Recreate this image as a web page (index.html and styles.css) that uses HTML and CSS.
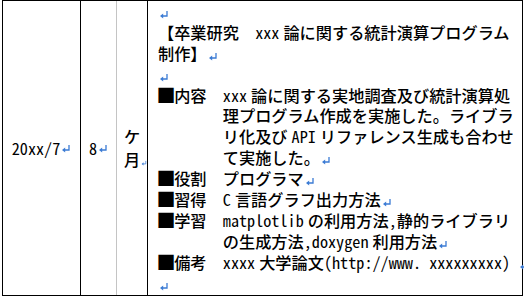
FILE: index.html
```html
<!DOCTYPE html>
<html lang="ja">
<head>
<meta charset="utf-8">
<link rel="stylesheet" href="styles.css">
</head>
<body>
<div class="table">
  <div class="cell c-date"><span class="en">20xx/7</span><svg class="pm" viewBox="0 0 10 9"><path d="M8 1V6H3.5"/><polygon points="1,6 4.2,3.4 4.2,8.6"/></svg></div>
  <div class="cell c-num"><span class="en">8</span><svg class="pm" viewBox="0 0 10 9"><path d="M8 1V6H3.5"/><polygon points="1,6 4.2,3.4 4.2,8.6"/></svg></div>
  <div class="cell c-unit"><div>ケ</div><div>月<svg class="pm pm-small" viewBox="0 0 10 9"><path d="M8 1V6H3.5"/><polygon points="1,6 4.2,3.4 4.2,8.6"/></svg></div></div>
  <div class="cell c-body">
    <div class="line"><svg class="pm" viewBox="0 0 10 9"><path d="M8 1V6H3.5"/><polygon points="1,6 4.2,3.4 4.2,8.6"/></svg></div>
    <div class="line">【卒業研究　<span class="en as-r">xxx</span>論に関する統計演算プログラム</div>
    <div class="line">制作】<svg class="pm" viewBox="0 0 10 9"><path d="M8 1V6H3.5"/><polygon points="1,6 4.2,3.4 4.2,8.6"/></svg></div>
    <div class="line"><svg class="pm" viewBox="0 0 10 9"><path d="M8 1V6H3.5"/><polygon points="1,6 4.2,3.4 4.2,8.6"/></svg></div>
    <div class="item">
      <div class="label"><span class="sq">■</span>内容</div>
      <div class="text">
        <div class="line"><span class="en as-r">xxx</span>論に関する実地調査及び統計演算処</div>
        <div class="line">理プログラム作成を実施した。ライブラ</div>
        <div class="line">リ化及び<span class="en as-l as-r">API</span>リファレンス生成も合わせ</div>
        <div class="line">て実施した。<svg class="pm" viewBox="0 0 10 9"><path d="M8 1V6H3.5"/><polygon points="1,6 4.2,3.4 4.2,8.6"/></svg></div>
      </div>
    </div>
    <div class="item">
      <div class="label"><span class="sq">■</span>役割</div>
      <div class="text"><div class="line">プログラマ<svg class="pm" viewBox="0 0 10 9"><path d="M8 1V6H3.5"/><polygon points="1,6 4.2,3.4 4.2,8.6"/></svg></div></div>
    </div>
    <div class="item">
      <div class="label"><span class="sq">■</span>習得</div>
      <div class="text"><div class="line"><span class="en as-r">C</span>言語グラフ出力方法<svg class="pm" viewBox="0 0 10 9"><path d="M8 1V6H3.5"/><polygon points="1,6 4.2,3.4 4.2,8.6"/></svg></div></div>
    </div>
    <div class="item">
      <div class="label"><span class="sq">■</span>学習</div>
      <div class="text">
        <div class="line"><span class="en as-r">matplotlib</span>の利用方法<span class="en">,</span>静的ライブラリ</div>
        <div class="line">の生成方法<span class="en as-r">,doxygen</span>利用方法<svg class="pm" viewBox="0 0 10 9"><path d="M8 1V6H3.5"/><polygon points="1,6 4.2,3.4 4.2,8.6"/></svg></div>
      </div>
    </div>
    <div class="item">
      <div class="label"><span class="sq">■</span>備考</div>
      <div class="text"><div class="line"><span class="en as-r">xxxx</span>大学論文<span class="en">(http://www. xxxxxxxxx) </span><svg class="pm" viewBox="0 0 10 9"><path d="M8 1V6H3.5"/><polygon points="1,6 4.2,3.4 4.2,8.6"/></svg></div></div>
    </div>
    <div class="line"><svg class="pm" viewBox="0 0 10 9"><path d="M8 1V6H3.5"/><polygon points="1,6 4.2,3.4 4.2,8.6"/></svg></div>
  </div>
</div>
</body>
</html>
```

FILE: styles.css
```css
* { box-sizing: border-box; }
html, body { margin: 0; padding: 0; background: #fff; }
body {
  font-family: "Noto Sans CJK JP", sans-serif;
  font-size: 16.2px;
  font-weight: 500;
  color: #000;
  text-spacing-trim: space-all;
}
.table {
  margin-left: 2px;
  width: 521px;
  height: 296px;
  border: 1px solid #000;
  display: grid;
  grid-template-columns: 78px 36px 31px 1fr;
}
.cell {
  border-right: 1px solid #000;
  display: flex;
  flex-direction: column;
  justify-content: center;
  align-items: center;
}
.c-date, .c-num { flex-direction: row; }
.c-num { border-right-color: #c4c4c4; }
.c-unit { line-height: 23px; }
.c-body {
  border-right: none;
  display: block;
  padding-left: 10px;
  line-height: 20.9px;
}
.en {
  font-family: "Noto Sans Mono CJK JP", "Noto Sans CJK JP", monospace;
  font-weight: 400;
}
.as-r { margin-right: 4px; }
.as-l { margin-left: 4px; }
.line { white-space: nowrap; height: 20.9px; }
.item {
  display: grid;
  grid-template-columns: 4em 1fr;
}
.label { white-space: nowrap; }
.sq {
  display: inline-block;
  transform: scale(1.18);
}
.pm {
  width: 10px;
  height: 9px;
  vertical-align: -1px;
  margin-left: 1px;
}
.pm path { fill: none; stroke: #3b7bd4; stroke-width: 1.3; }
.pm polygon { fill: #3b7bd4; }
.pm-small {
  width: 6px;
  height: 6px;
  margin-right: -7px;
  vertical-align: 0;
}
```
